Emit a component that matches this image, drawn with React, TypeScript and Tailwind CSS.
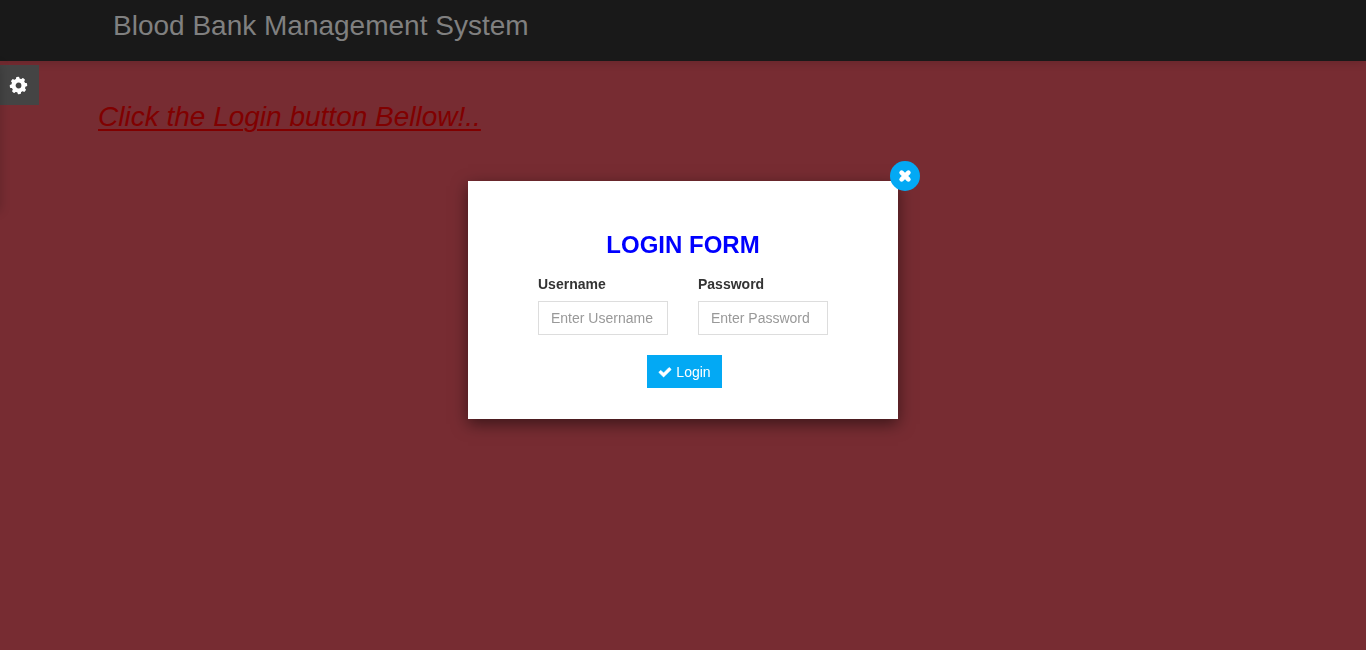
import React from "react";

type IconProps = { className?: string };

const TEETH = [-6, 39, 84, 129, 174, 219, 264, 309];

function CogIcon({ className }: IconProps) {
  return (
    <svg viewBox="0 0 21 21" fill="none" stroke="currentColor" className={className} aria-hidden="true">
      <circle cx="10.5" cy="10.5" r="5" strokeWidth="4.2" />
      {TEETH.map((angle) => (
        <path
          key={angle}
          d="M9.300 4.500L9.700 2.600H11.300L11.700 4.500Z"
          fill="currentColor"
          strokeWidth="1.6"
          strokeLinejoin="round"
          transform={`rotate(${angle} 10.5 10.5)`}
        />
      ))}
    </svg>
  );
}

function TimesIcon({ className }: IconProps) {
  return (
    <svg viewBox="0 0 18 18" fill="none" stroke="currentColor" className={className} aria-hidden="true">
      <path d="M5.600 5.600L12.400 12.400M12.400 5.600L5.600 12.400" strokeWidth="4.6" strokeLinecap="round" />
    </svg>
  );
}

function CheckIcon({ className }: IconProps) {
  return (
    <svg
      viewBox="0 0 1792 1792"
      fill="currentColor"
      stroke="currentColor"
      strokeWidth="70"
      className={className}
      aria-hidden="true"
    >
      <path d="M1671 566q0 40-28 68l-724 724-136 136q-28 28-68 28t-68-28l-136-136-362-362q-28-28-28-68t28-68l136-136q28-28 68-28t68 28l294 295 656-657q28-28 68-28t68 28l136 136q28 28 28 68z" />
    </svg>
  );
}

type FieldProps = { id: string; label: string; type: string; placeholder: string };

function Field({ id, label, type, placeholder }: FieldProps) {
  return (
    <div className="min-w-0 flex-1">
      <label htmlFor={id} className="mb-[7px] block text-sm font-bold text-[#333]">
        {label}
      </label>
      <input
        id={id}
        type={type}
        placeholder={placeholder}
        className="block h-[34px] w-full border border-[#ddd] bg-white px-3 text-sm text-[#555] outline-none placeholder:text-[#999]"
      />
    </div>
  );
}

function LoginDialog() {
  return (
    <div className="fixed inset-0 z-20 flex items-start justify-center pt-[181px]">
      <div
        role="dialog"
        aria-labelledby="login-title"
        className="relative w-full max-w-[430px] bg-white px-[70px] pt-12 pb-[31px] shadow-[0_5px_15px_rgba(0,0,0,0.5)]"
      >
        <button
          type="button"
          aria-label="Close"
          className="absolute -top-5 -right-[22px] flex size-[30px] items-center justify-center rounded-full bg-[#03a9f4] text-white"
        >
          <TimesIcon className="size-[18px]" />
        </button>
        <form>
          <h2 id="login-title" className="mb-[13px] text-center text-2xl font-bold text-[#00f]">
            LOGIN FORM
          </h2>
          <div className="flex gap-[30px]">
            <Field id="username" label="Username" type="text" placeholder="Enter Username" />
            <Field id="password" label="Password" type="password" placeholder="Enter Password" />
          </div>
          <div className="mt-5 flex justify-center pl-[3px]">
            <button
              type="button"
              className="flex h-[33px] items-center gap-1 bg-[#03a9f4] px-[11px] text-sm text-white"
            >
              <CheckIcon className="size-[14px]" />
              Login
            </button>
          </div>
        </form>
      </div>
    </div>
  );
}

export default function App() {
  return (
    <div className="min-h-screen overflow-hidden bg-[#772c32] font-['Liberation_Sans',Arial,sans-serif]">
      <header className="relative h-[61px] bg-[#191919] px-[113px] pt-[5px] shadow-[0_0_10px_rgba(0,0,0,0.2)]">
        <h1 className="text-[28px] leading-[42px] text-[#808080]">Blood Bank Management System</h1>
      </header>
      <main className="relative">
        <aside className="absolute top-1 left-0">
          <div className="absolute top-0 right-full h-[146px] w-10 shadow-[0_0_10px_rgba(0,0,0,0.2)]" />
          <button
            type="button"
            aria-label="Settings"
            className="flex h-10 w-[39px] items-center bg-[#444] pl-2 text-white"
          >
            <CogIcon className="size-[21px]" />
          </button>
        </aside>
        <p className="px-[98px] pt-[35px] text-[28px] leading-[42px] text-[#800000] italic underline decoration-2 underline-offset-3">
          Click the Login button Bellow!..
        </p>
      </main>
      <LoginDialog />
    </div>
  );
}
